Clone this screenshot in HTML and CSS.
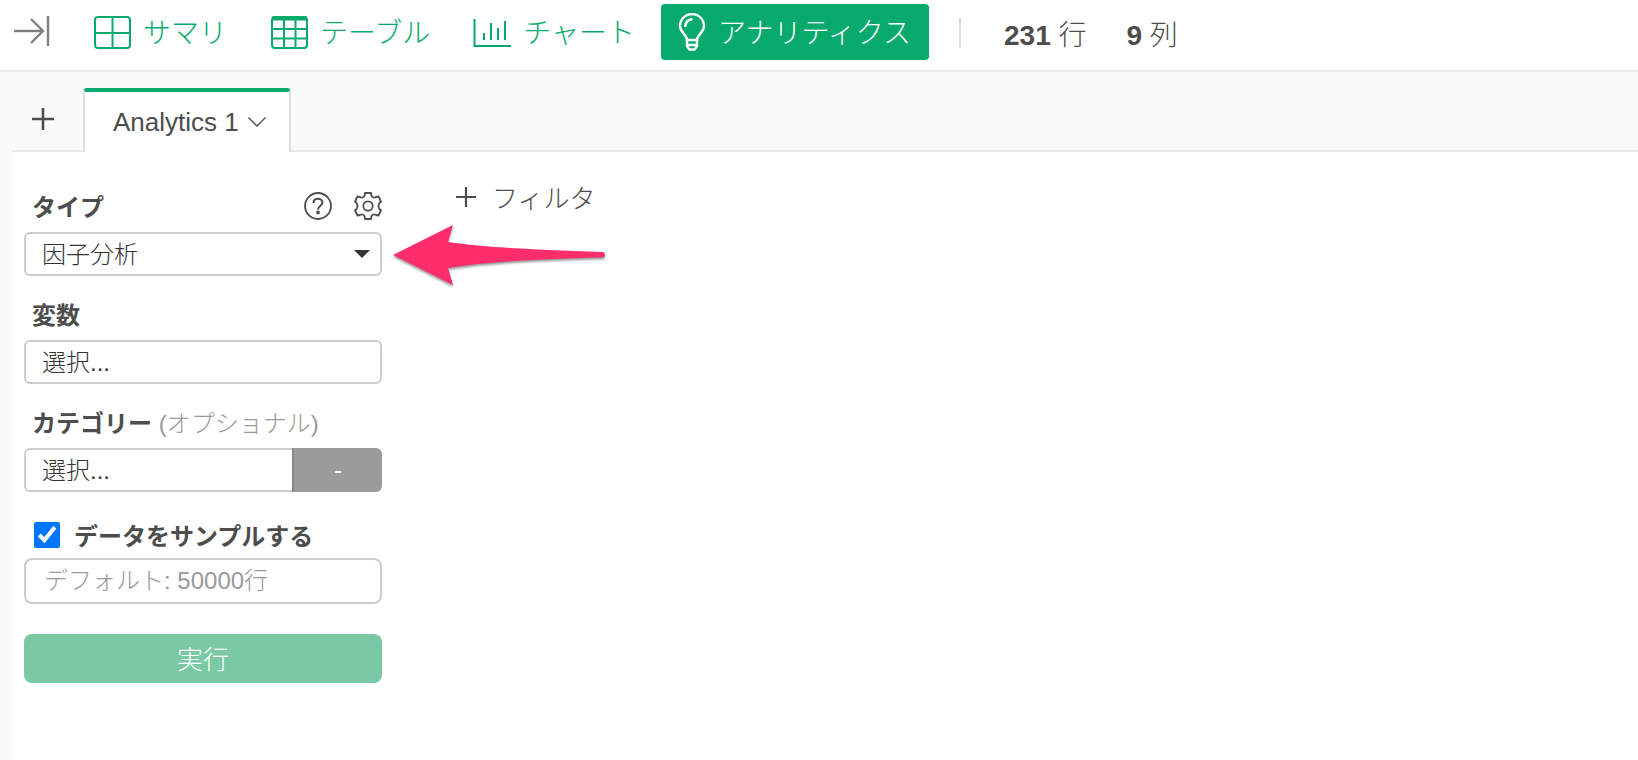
FILE: index.html
```
<!DOCTYPE html>
<html lang="ja">
    <head>
        <meta charset="UTF-8" />
        <meta name="viewport" content="width=device-width, initial-scale=1.0" />
        <title>アナリティクス</title>
        <link rel="stylesheet" href="styles.css">
    </head>
    <body>
        <header class="header">
            <button type="button" class="collapse" aria-label="collapse">
                <svg width="36" height="30" viewBox="0 0 36 30" fill="none" stroke="currentColor" stroke-width="2.4">
                    <path d="M0 15H29M17 3L29 15L17 27M34 0V30" />
                </svg>
            </button>
            <nav class="nav">
                <a href="#">
                    <svg width="38" height="34" viewBox="0 0 38 34" fill="none" stroke="currentColor" stroke-width="2">
                        <rect x="2" y="2" width="35" height="31" rx="3" />
                        <path d="M19.500 2V33M2 18H37" />
                    </svg>
                    <span>サマリ</span>
                </a>
                <a href="#">
                    <svg width="38" height="34" viewBox="0 0 38 34" fill="none" stroke="currentColor" stroke-width="2">
                        <rect x="2" y="2" width="35" height="31" rx="3" />
                        <path d="M2 3.5H37" stroke-width="4" />
                        <path d="M14 3V33M25.500 3V33M2 14H37M2 23.500H37" />
                    </svg>
                    <span>テーブル</span>
                </a>
                <a href="#">
                    <svg width="38" height="34" viewBox="0 0 38 34" fill="none" stroke="currentColor" stroke-width="2">
                        <path d="M1.500 4V31H38M11 18V25M18 8V25M25 13V25M32 6V25" />
                    </svg>
                    <span>チャート</span>
                </a>
                <a href="#" class="current">
                    <svg width="28" height="38" viewBox="0 0 28 38" fill="none" stroke="currentColor" stroke-width="2.4">
                        <path d="M9 27C9 21 2 20 2 13A12 12 0 0 1 26 13C26 20 19 21 19 27Z" />
                        <path d="M7 14Q7.500 7 14.500 6" />
                        <path d="M9 27V33L11.500 36.500H16.500L19 33V27M9 32H19" />
                    </svg>
                    <span>アナリティクス</span>
                </a>
            </nav>
            <div class="counts">
                <span><b>231</b> 行</span>
                <span><b>9</b> 列</span>
            </div>
        </header>

        <div class="tabs">
            <button type="button" class="add-tab" aria-label="add">
                <svg width="22" height="22" viewBox="0 0 22 22" stroke="currentColor" stroke-width="2.6">
                    <path d="M0 11H22M11 0V22" />
                </svg>
            </button>
            <button type="button" class="tab">
                Analytics 1
                <svg width="18" height="10" viewBox="0 0 18 10" fill="none" stroke="currentColor" stroke-width="1.4">
                    <path d="M0.500 0.500L9 9L17.500 0.500" />
                </svg>
            </button>
        </div>

        <main class="main">
            <form class="side">
                <div class="field">
                    <div class="label-row">
                        <label for="type">タイプ</label>
                        <button type="button" class="icon-btn" aria-label="help">
                            <svg width="28" height="28" viewBox="0 0 28 28" fill="none" stroke="currentColor" stroke-width="1.8">
                                <circle cx="14" cy="14" r="13" />
                                <path d="M9.500 11C9.500 5.500 18.500 5.500 18.500 10.500C18.500 13.500 14 14 14 17.500" stroke-width="2" />
                                <circle cx="14" cy="20.500" r="1" />
                            </svg>
                        </button>
                        <button type="button" class="icon-btn" aria-label="settings">
                            <svg width="28" height="28" viewBox="0 0 28 28" fill="none" stroke="currentColor" stroke-width="1.8" stroke-linejoin="round">
                                <path d="M11 1H17L17.500 4Q19.500 6.500 22 5L24.500 4.500L27 9.500L25.500 11Q23.500 14 25.500 17L27 18.500L24.500 23.500L22 23Q19.500 21.500 17.500 24L17 27H11L10.500 24Q8.500 21.500 6 23L3.500 23.500L1 18.500L2.500 17Q4.500 14 2.500 11L1 9.500L3.500 4.500L6 5Q8.500 6.500 10.500 4Z" />
                                <circle cx="14" cy="14" r="4.700" />
                            </svg>
                        </button>
                    </div>
                    <div class="select-wrap">
                        <select id="type" class="box">
                            <option>因子分析</option>
                        </select>
                        <i class="caret"></i>
                    </div>
                </div>

                <div class="field">
                    <div class="label-row">
                        <label for="vars">変数</label>
                    </div>
                    <select id="vars" class="box">
                        <option>選択...</option>
                    </select>
                </div>

                <div class="field">
                    <div class="label-row">
                        <label for="category">カテゴリー <span class="optional">(オプショナル)</span></label>
                    </div>
                    <div class="group">
                        <select id="category" class="box">
                            <option>選択...</option>
                        </select>
                        <button type="button" class="minus">-</button>
                    </div>
                </div>

                <div class="field">
                    <div class="label-row sample-row">
                        <input type="checkbox" id="sample" class="check" checked>
                        <label for="sample">データをサンプルする</label>
                    </div>
                    <input type="text" class="box rows" placeholder="デフォルト: 50000行" aria-label="行数">
                </div>

                <button type="button" class="run">実行</button>
            </form>

            <section class="content">
                <button type="button" class="filter">
                    <svg width="20" height="20" viewBox="0 0 20 20" stroke="currentColor" stroke-width="2.200">
                        <path d="M0 10H20M10 0V20" />
                    </svg>
                    <span>フィルタ</span>
                </button>
            </section>

            <!-- タイプを指す矢印 -->
            <svg class="arrow" width="214" height="64" viewBox="0 0 214 64">
                <path d="M0 30L60 0L55 17C90 22 140 25 209 27Q212 27 212 30Q212 32 209 32.500C140 34 90 37 55 43L60 60Z" fill="#ff2d6b" />
            </svg>
        </main>
    </body>
</html>
```
FILE: styles.css
```
* {
    margin: 0;
    padding: 0;
    box-sizing: border-box;
}

body {
    min-height: 100vh;
    display: flex;
    flex-direction: column;
    background-color: #fafafa;
    color: #4d4d4d;
    font-family: "Liberation Sans", "Noto Sans CJK JP", sans-serif;
    font-size: 24px;
    font-weight: 300;
}

svg {
    display: block;
    flex: none;
}

b {
    font-weight: bold;
}

button,
input,
select {
    font: inherit;
    color: inherit;
}

button {
    border: 0;
    background: none;
    cursor: pointer;
}

/* ヘッダー */
.header {
    display: flex;
    height: 72px;
    padding: 4px 14px 0;
    background-color: #fff;
    border-bottom: 2px solid #e8e8e8;
    font-size: 28px;
    white-space: nowrap;
}

.collapse {
    height: 54px;
    color: #808080;
}

.nav {
    display: flex;
    gap: 8px;
    margin-left: 26px;
}

.nav a {
    display: flex;
    align-items: center;
    gap: 12px;
    height: 56px;
    padding: 0 18px 0 17px;
    border-radius: 4px;
    color: #07aa6c;
    text-decoration: none;
}

.nav span,
.filter span {
    padding-bottom: 2px;
}

.nav .current {
    background-color: #07aa6c;
    color: #fff;
}

.counts {
    display: flex;
    align-items: center;
    gap: 40px;
    height: 30px;
    margin: 14px 0 0 30px;
    padding-left: 43px;
    border-left: 2px solid #ddd;
}

/* タブ */
.tabs {
    display: flex;
    height: 80px;
    margin-left: 12px;
    padding-top: 16px;
    border-bottom: 2px solid #e8e8e8;
}

.add-tab {
    width: 71px;
    padding: 0 29px 0 20px;
}

.tab {
    display: flex;
    align-items: center;
    gap: 9px;
    height: 64px;
    padding: 0 23px 0 28px;
    background-color: #fff;
    border: 2px solid #ddd;
    border-top: 4px solid #07aa6c;
    border-bottom: 0;
    border-radius: 4px 4px 0 0;
    font-size: 26px;
}

/* メイン */
.main {
    position: relative;
    flex: 1;
    display: flex;
    gap: 74px;
    margin-left: 12px;
    padding: 28px 12px;
    background-color: #fff;
}

.side {
    width: 358px;
}

.field {
    margin-bottom: 12px;
}

.label-row {
    display: flex;
    align-items: center;
    gap: 22px;
    height: 52px;
    padding-left: 8px;
}

.label-row label {
    flex: 1;
    padding-bottom: 2px;
    font-weight: bold;
}

.label-row .optional {
    color: #999;
    font-weight: 300;
}

.box {
    display: block;
    width: 100%;
    height: 44px;
    padding: 0 16px;
    background-color: #fff;
    border: 2px solid #ccc;
    border-radius: 6px;
    color: #333;
    appearance: none;
}

.select-wrap {
    position: relative;
}

.caret {
    position: absolute;
    top: 18px;
    right: 12px;
    border: 8px solid transparent;
    border-top-color: #333;
    border-bottom: 0;
    pointer-events: none;
}

.group {
    display: flex;
}

.group .box {
    flex: 1;
    border-right: 0;
    border-radius: 6px 0 0 6px;
}

.minus {
    width: 90px;
    background-color: #9b9b9b;
    border-left: 2px solid #888;
    border-radius: 0 6px 6px 0;
    color: #fff;
}

.sample-row {
    gap: 14px;
    height: 54px;
    padding: 8px 0 0 10px;
}

.check {
    width: 26px;
    height: 26px;
    accent-color: #0075ff;
}

.rows {
    height: 46px;
    padding: 0 18px;
    border-radius: 8px;
}

.rows::placeholder {
    color: #999;
}

.run {
    width: 100%;
    height: 49px;
    margin-top: 18px;
    padding-bottom: 2px;
    background-color: #7ac9a4;
    border-radius: 8px;
    color: #fff;
    font-size: 26px;
}

.filter {
    display: flex;
    align-items: center;
    gap: 16px;
    height: 34px;
    font-size: 26px;
}

.arrow {
    position: absolute;
    top: 73px;
    left: 381px;
    filter: drop-shadow(0 2px 1px rgba(0, 0, 0, 0.4));
}
```
